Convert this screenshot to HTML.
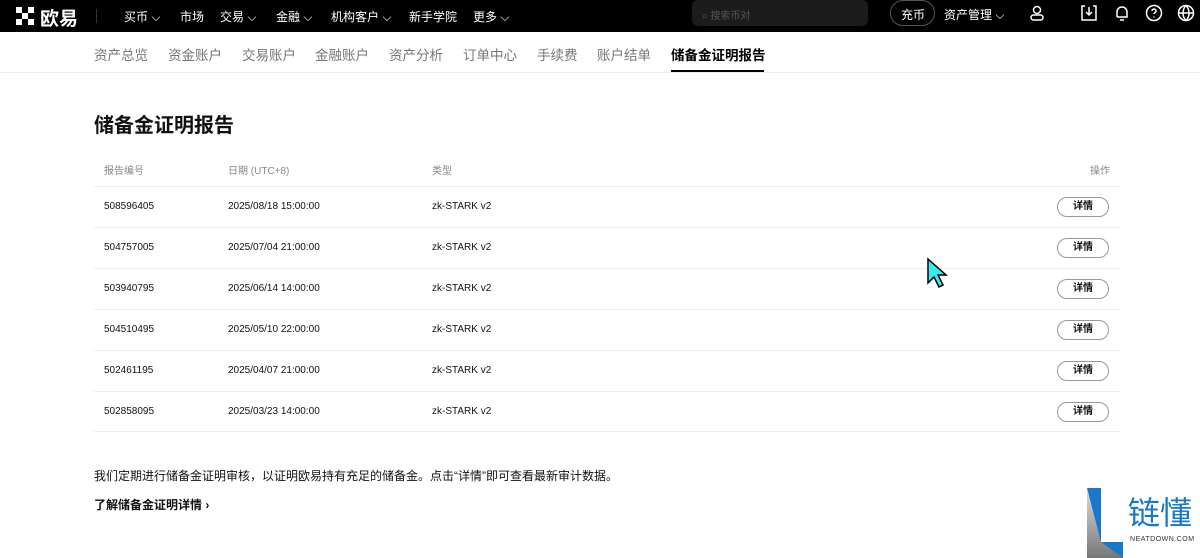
<!DOCTYPE html>
<html><head><meta charset="utf-8"><style>
*{margin:0;padding:0;box-sizing:border-box}
body{width:1200px;height:558px;overflow:hidden;background:#fff;font-family:"Liberation Sans","Noto Sans CJK SC",sans-serif;color:#111;position:relative}
.top{position:absolute;left:0;top:0;width:1200px;height:32px;background:#000;color:#fff;font-size:12px}
.top span{position:absolute;top:8px}
.sub{position:absolute;top:32px;left:0;width:1200px;height:41px;border-bottom:1px solid #eee;font-size:13.5px;color:#777}
.sub span{position:absolute;top:12px}
h1{position:absolute;left:94px;top:109px;font-size:20px;font-weight:bold}
.t{position:absolute;left:94px;width:1026px;font-size:10px}
.row{position:absolute;left:94px;width:1026px;height:41px;border-top:1px solid #eee;font-size:10px}
.row span{position:absolute;top:14px}
.btn{position:absolute;left:963px;top:10px;width:52px;height:20px;border:1px solid #999;border-radius:10px;text-align:center;line-height:18px;font-weight:bold;font-size:10px}
</style></head><body>
<div class="top">
<svg style="position:absolute;left:16px;top:7px" width="20" height="18" viewBox="0 0 20 18" fill="#fff"><rect x="0" y="0" width="6" height="6"/><rect x="12" y="0" width="6" height="6"/><rect x="6" y="6" width="6" height="6"/><rect x="0" y="12" width="6" height="6"/><rect x="12" y="12" width="6" height="6"/></svg>
<span style="left:40px;top:4px;font-size:19px;font-weight:bold">欧易</span>
<div style="position:absolute;left:96px;top:9px;width:1px;height:14px;background:#333"></div>
<span style="left:124px">买币 ⌵</span><span style="left:180px">市场</span><span style="left:220px">交易 ⌵</span><span style="left:276px">金融 ⌵</span><span style="left:331px">机构客户 ⌵</span><span style="left:409px">新手学院</span><span style="left:473px">更多 ⌵</span>
<div style="position:absolute;left:692px;top:0;width:176px;height:26px;background:#1c1c1c;border-radius:6px"></div>
<span style="left:702px;top:7px;color:#555;font-size:10px">⌕ 搜索币对</span>
<div style="position:absolute;left:890px;top:0;width:45px;height:26px;border:1px solid #555;border-radius:13px"></div>
<span style="left:901px;top:6px">充币</span><span style="left:944px;top:6px">资产管理 ⌵</span>
<svg style="position:absolute;left:1028px;top:4px" width="18" height="18" fill="none" stroke="#fff" stroke-width="1.5"><circle cx="9" cy="6" r="3.5"/><rect x="3" y="11" width="12" height="5" rx="2.5"/></svg>
<svg style="position:absolute;left:1080px;top:4px" width="18" height="18" fill="none" stroke="#fff" stroke-width="1.5"><path d="M5 2H2v14h14V2h-3M9 3v8M6 8l3 3 3-3"/></svg>
<svg style="position:absolute;left:1113px;top:4px" width="18" height="18" fill="none" stroke="#fff" stroke-width="1.5"><path d="M4 13V8a5 5 0 0110 0v5H4M7 16h4"/></svg>
<svg style="position:absolute;left:1145px;top:4px" width="18" height="18" fill="none" stroke="#fff" stroke-width="1.5"><circle cx="9" cy="9" r="7.5"/><path d="M7 7a2 2 0 114 0c0 1.5-2 1.5-2 3M9 12.5v1"/></svg>
<svg style="position:absolute;left:1177px;top:4px" width="18" height="18" fill="none" stroke="#fff" stroke-width="1.5"><circle cx="9" cy="9" r="7.5"/><path d="M1.5 9h15M9 1.5c-4 4-4 11 0 15c4-4 4-11 0-15"/></svg>
</div>
<div class="sub">
<span style="left:94px">资产总览</span><span style="left:168px">资金账户</span><span style="left:242px">交易账户</span><span style="left:315px">金融账户</span><span style="left:389px">资产分析</span><span style="left:463px">订单中心</span><span style="left:537px">手续费</span><span style="left:597px">账户结单</span>
<span style="left:671px;color:#000;font-weight:bold">储备金证明报告</span>
<div style="position:absolute;left:671px;top:38px;width:93px;height:2px;background:#000"></div>
</div>
<h1>储备金证明报告</h1>
<div class="t" style="top:162px;color:#888"><span style="position:absolute;left:10px">报告编号</span><span style="position:absolute;left:134px">日期 (UTC+8)</span><span style="position:absolute;left:338px">类型</span><span style="position:absolute;left:996px">操作</span></div>
<div class="row" style="top:186px"><span style="left:10px">508596405</span><span style="left:134px">2025/08/18 15:00:00</span><span style="left:338px">zk-STARK v2</span><div class="btn">详情</div></div>
<div class="row" style="top:227px"><span style="left:10px">504757005</span><span style="left:134px">2025/07/04 21:00:00</span><span style="left:338px">zk-STARK v2</span><div class="btn">详情</div></div>
<div class="row" style="top:268px"><span style="left:10px">503940795</span><span style="left:134px">2025/06/14 14:00:00</span><span style="left:338px">zk-STARK v2</span><div class="btn">详情</div></div>
<div class="row" style="top:309px"><span style="left:10px">504510495</span><span style="left:134px">2025/05/10 22:00:00</span><span style="left:338px">zk-STARK v2</span><div class="btn">详情</div></div>
<div class="row" style="top:350px"><span style="left:10px">502461195</span><span style="left:134px">2025/04/07 21:00:00</span><span style="left:338px">zk-STARK v2</span><div class="btn">详情</div></div>
<div class="row" style="top:391px;border-bottom:1px solid #eee"><span style="left:10px">502858095</span><span style="left:134px">2025/03/23 14:00:00</span><span style="left:338px">zk-STARK v2</span><div class="btn">详情</div></div>
<div style="position:absolute;left:94px;top:467px;font-size:12px">我们定期进行储备金证明审核，以证明欧易持有充足的储备金。点击“详情”即可查看最新审计数据。</div>
<div style="position:absolute;left:94px;top:496px;font-size:12px;font-weight:bold">了解储备金证明详情 ›</div>
<svg style="position:absolute;left:926px;top:257px" width="22" height="32"><path d="M2 2v24l6-6 5 10 4-2-5-10h8z" fill="#3ee" stroke="#000" stroke-width="1.5"/></svg>
<svg style="position:absolute;left:1087px;top:488px" width="36" height="70"><defs><linearGradient id="g" x1="0" y1="0" x2="0" y2="1"><stop offset="0" stop-color="#ddd"/><stop offset="1" stop-color="#777"/></linearGradient></defs><path d="M0 0h14v54h22v16H0z" fill="#1a78c8"/><path d="M0 0l14 54 22 16H0z" fill="url(#g)"/></svg>
<div style="position:absolute;left:1128px;top:495px;font-size:32px;color:#1a78c8;line-height:36px">链懂</div>
<div style="position:absolute;left:1130px;top:536px;font-size:7px;color:#333;letter-spacing:.5px">NEATDOWN.COM</div>
</body></html>
